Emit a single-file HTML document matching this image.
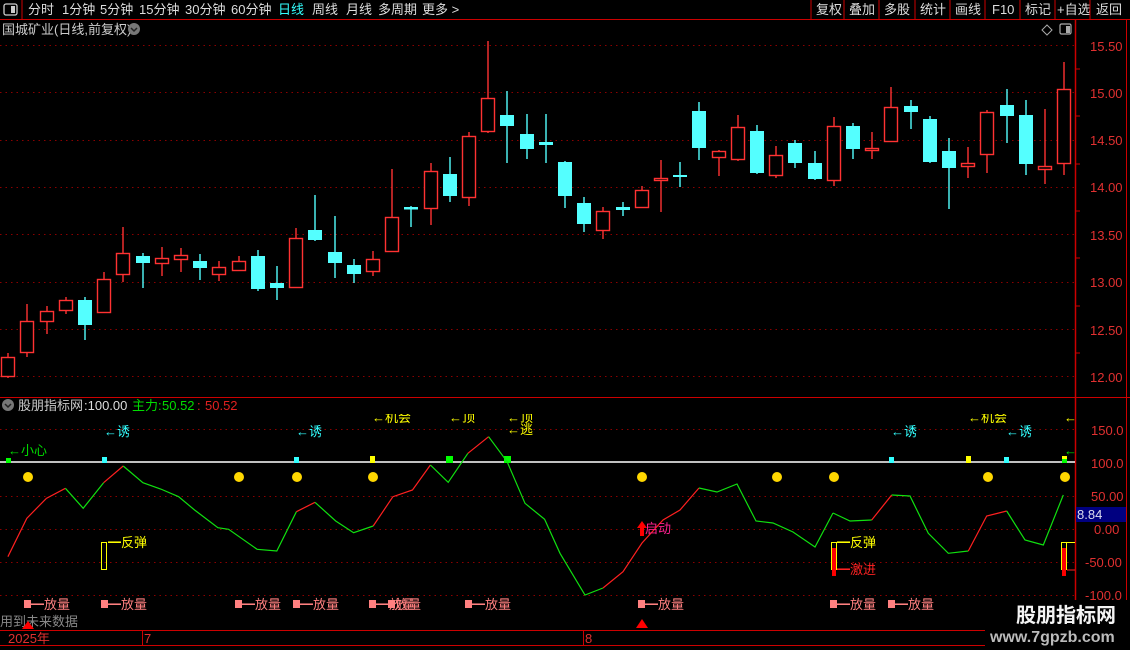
<!DOCTYPE html>
<html><head><meta charset="utf-8"><style>
html,body{margin:0;padding:0;background:#000;width:1130px;height:650px;overflow:hidden}
svg{display:block}
text{font-family:"Liberation Sans","Noto Sans CJK SC",sans-serif}
</style></head><body>
<svg width="1130" height="650" viewBox="0 0 1130 650" xmlns="http://www.w3.org/2000/svg">
<rect width="1130" height="650" fill="#000"/>
<!-- top bar -->
<rect x="4" y="4" width="13" height="11" rx="2" fill="none" stroke="#ccc" stroke-width="1.3"/>
<rect x="11" y="6" width="4" height="7" fill="#ccc"/>
<line x1="22" y1="0" x2="22" y2="19" stroke="#c00"/>
<g font-size="13" fill="#ddd">
<text x="28" y="14">分时</text><text x="62" y="14">1分钟</text><text x="100" y="14">5分钟</text><text x="139" y="14">15分钟</text><text x="185" y="14">30分钟</text><text x="231" y="14">60分钟</text>
<text x="278" y="14" fill="#3ff">日线</text><text x="312" y="14">周线</text><text x="346" y="14">月线</text><text x="378" y="14">多周期</text><text x="422" y="14">更多 &gt;</text>
<text x="816" y="14">复权</text><text x="849" y="14">叠加</text><text x="884" y="14">多股</text><text x="920" y="14">统计</text><text x="955" y="14">画线</text><text x="992" y="14">F10</text><text x="1025" y="14">标记</text><text x="1057" y="14">+自选</text><text x="1096" y="14">返回</text>
</g>
<g stroke="#c00"><line x1="811" y1="0" x2="811" y2="19"/><line x1="844" y1="0" x2="844" y2="19"/><line x1="879" y1="0" x2="879" y2="19"/><line x1="915" y1="0" x2="915" y2="19"/><line x1="950" y1="0" x2="950" y2="19"/><line x1="985" y1="0" x2="985" y2="19"/><line x1="1020" y1="0" x2="1020" y2="19"/><line x1="1055" y1="0" x2="1055" y2="19"/><line x1="1090" y1="0" x2="1090" y2="19"/></g>
<line x1="0" y1="19.5" x2="1130" y2="19.5" stroke="#c00"/>
<text x="2" y="34" font-size="13" fill="#ccc">国城矿业(日线,前复权)</text>
<circle cx="134" cy="29" r="6" fill="#777"/><path d="M131 28l3 3 3-3" stroke="#222" stroke-width="1.5" fill="none"/>
<path d="M1047 25l5 5-5 5-5-5z" fill="none" stroke="#aaa"/>
<rect x="1060" y="24" width="11" height="10" rx="1.5" fill="none" stroke="#aaa" stroke-width="1.2"/><rect x="1066" y="26" width="4" height="7" fill="#aaa"/>
<!-- axis lines -->
<line x1="1075.5" y1="19" x2="1075.5" y2="630" stroke="#c00" stroke-width="1.5"/>
<line x1="1126.5" y1="19" x2="1126.5" y2="630" stroke="#c00"/>
<!-- price grid -->
<g stroke="#8b0000" stroke-dasharray="1.5,4">
<line x1="0" y1="45.5" x2="1075" y2="45.5"/><line x1="0" y1="92.5" x2="1075" y2="92.5"/><line x1="0" y1="140.5" x2="1075" y2="140.5"/><line x1="0" y1="187.5" x2="1075" y2="187.5"/><line x1="0" y1="234.5" x2="1075" y2="234.5"/><line x1="0" y1="282.5" x2="1075" y2="282.5"/><line x1="0" y1="329.5" x2="1075" y2="329.5"/><line x1="0" y1="376.5" x2="1075" y2="376.5"/>
</g>
<g font-size="13" fill="#e03030">
<text x="1090" y="51">15.50</text><text x="1090" y="98">15.00</text><text x="1090" y="145">14.50</text><text x="1090" y="192">14.00</text><text x="1090" y="240">13.50</text><text x="1090" y="287">13.00</text><text x="1090" y="335">12.50</text><text x="1090" y="382">12.00</text>
</g>
<g stroke="#c00"><line x1="1075" y1="69" x2="1080" y2="69"/><line x1="1075" y1="116" x2="1080" y2="116"/><line x1="1075" y1="164" x2="1080" y2="164"/><line x1="1075" y1="211" x2="1080" y2="211"/><line x1="1075" y1="258" x2="1080" y2="258"/><line x1="1075" y1="306" x2="1080" y2="306"/><line x1="1075" y1="353" x2="1080" y2="353"/></g>
<!-- candles -->
<g stroke-width="1.4">
<g stroke="#ff3232" fill="#000">
<line x1="8" y1="353" x2="8" y2="378"/><rect x="1.5" y="357.5" width="13" height="19"/>
<line x1="27" y1="304" x2="27" y2="357"/><rect x="20.5" y="321.5" width="13" height="31"/>
<line x1="47" y1="306" x2="47" y2="334"/><rect x="40.5" y="311.5" width="13" height="10"/>
<line x1="66" y1="297" x2="66" y2="314"/><rect x="59.5" y="300.5" width="13" height="10"/>
<line x1="104" y1="272" x2="104" y2="313"/><rect x="97.5" y="279.5" width="13" height="33"/>
<line x1="123" y1="227" x2="123" y2="282"/><rect x="116.5" y="253.5" width="13" height="21"/>
<line x1="162" y1="247" x2="162" y2="276"/><rect x="155.5" y="258.5" width="13" height="5"/>
<line x1="181" y1="248" x2="181" y2="272"/><rect x="174.5" y="255.5" width="13" height="4"/>
<line x1="219" y1="261" x2="219" y2="281"/><rect x="212.5" y="267.5" width="13" height="7"/>
<line x1="239" y1="256" x2="239" y2="271"/><rect x="232.5" y="261.5" width="13" height="9"/>
<line x1="296" y1="228" x2="296" y2="288"/><rect x="289.5" y="238.5" width="13" height="49"/>
<line x1="373" y1="251" x2="373" y2="276"/><rect x="366.5" y="259.5" width="13" height="12"/>
<line x1="392" y1="169" x2="392" y2="252"/><rect x="385.5" y="217.5" width="13" height="34"/>
<line x1="431" y1="163" x2="431" y2="225"/><rect x="424.5" y="171.5" width="13" height="37"/>
<line x1="469" y1="132" x2="469" y2="206"/><rect x="462.5" y="136.5" width="13" height="61"/>
<line x1="488" y1="41" x2="488" y2="133"/><rect x="481.5" y="98.5" width="13" height="33"/>
<line x1="603" y1="207" x2="603" y2="239"/><rect x="596.5" y="211.5" width="13" height="19"/>
<line x1="642" y1="186" x2="642" y2="208"/><rect x="635.5" y="190.5" width="13" height="17"/>
<line x1="661" y1="160" x2="661" y2="212"/><rect x="654.5" y="178.5" width="13" height="2"/>
<line x1="719" y1="150" x2="719" y2="176"/><rect x="712.5" y="151.5" width="13" height="6"/>
<line x1="738" y1="115" x2="738" y2="161"/><rect x="731.5" y="127.5" width="13" height="32"/>
<line x1="776" y1="146" x2="776" y2="178"/><rect x="769.5" y="155.5" width="13" height="20"/>
<line x1="834" y1="117" x2="834" y2="186"/><rect x="827.5" y="126.5" width="13" height="54"/>
<line x1="872" y1="132" x2="872" y2="159"/><rect x="865.5" y="148.5" width="13" height="2"/>
<line x1="891" y1="87" x2="891" y2="142"/><rect x="884.5" y="107.5" width="13" height="34"/>
<line x1="968" y1="147" x2="968" y2="178"/><rect x="961.5" y="163.5" width="13" height="3"/>
<line x1="987" y1="110" x2="987" y2="173"/><rect x="980.5" y="112.5" width="13" height="42"/>
<line x1="1045" y1="109" x2="1045" y2="184"/><rect x="1038.5" y="166.5" width="13" height="3"/>
<line x1="1064" y1="62" x2="1064" y2="175"/><rect x="1057.5" y="89.5" width="13" height="74"/>
</g>
<g stroke="#54ffff" fill="#54ffff">
<line x1="85" y1="297" x2="85" y2="340"/><rect x="78" y="300" width="14" height="25" stroke="none"/>
<line x1="143" y1="253" x2="143" y2="288"/><rect x="136" y="256" width="14" height="7" stroke="none"/>
<line x1="200" y1="254" x2="200" y2="280"/><rect x="193" y="261" width="14" height="7" stroke="none"/>
<line x1="258" y1="250" x2="258" y2="291"/><rect x="251" y="256" width="14" height="33" stroke="none"/>
<line x1="277" y1="266" x2="277" y2="300"/><rect x="270" y="283" width="14" height="5" stroke="none"/>
<line x1="315" y1="195" x2="315" y2="241"/><rect x="308" y="230" width="14" height="10" stroke="none"/>
<line x1="335" y1="216" x2="335" y2="278"/><rect x="328" y="252" width="14" height="11" stroke="none"/>
<line x1="354" y1="259" x2="354" y2="283"/><rect x="347" y="265" width="14" height="9" stroke="none"/>
<line x1="411" y1="206" x2="411" y2="227"/><rect x="404" y="207" width="14" height="2.5" stroke="none"/>
<line x1="450" y1="157" x2="450" y2="202"/><rect x="443" y="174" width="14" height="22" stroke="none"/>
<line x1="507" y1="91" x2="507" y2="163"/><rect x="500" y="115" width="14" height="11" stroke="none"/>
<line x1="527" y1="114" x2="527" y2="159"/><rect x="520" y="134" width="14" height="15" stroke="none"/>
<line x1="546" y1="114" x2="546" y2="163"/><rect x="539" y="142" width="14" height="3" stroke="none"/>
<line x1="565" y1="161" x2="565" y2="208"/><rect x="558" y="162" width="14" height="34" stroke="none"/>
<line x1="584" y1="197" x2="584" y2="232"/><rect x="577" y="203" width="14" height="21" stroke="none"/>
<line x1="623" y1="202" x2="623" y2="216"/><rect x="616" y="207" width="14" height="3" stroke="none"/>
<line x1="680" y1="162" x2="680" y2="187"/><rect x="673" y="175" width="14" height="2" stroke="none"/>
<line x1="699" y1="102" x2="699" y2="160"/><rect x="692" y="111" width="14" height="37" stroke="none"/>
<line x1="757" y1="125" x2="757" y2="174"/><rect x="750" y="131" width="14" height="42" stroke="none"/>
<line x1="795" y1="140" x2="795" y2="168"/><rect x="788" y="143" width="14" height="20" stroke="none"/>
<line x1="815" y1="151" x2="815" y2="180"/><rect x="808" y="163" width="14" height="16" stroke="none"/>
<line x1="853" y1="123" x2="853" y2="159"/><rect x="846" y="126" width="14" height="23" stroke="none"/>
<line x1="911" y1="100" x2="911" y2="129"/><rect x="904" y="106" width="14" height="6" stroke="none"/>
<line x1="930" y1="116" x2="930" y2="163"/><rect x="923" y="119" width="14" height="43" stroke="none"/>
<line x1="949" y1="138" x2="949" y2="209"/><rect x="942" y="151" width="14" height="17" stroke="none"/>
<line x1="1007" y1="89" x2="1007" y2="143"/><rect x="1000" y="105" width="14" height="11" stroke="none"/>
<line x1="1026" y1="100" x2="1026" y2="175"/><rect x="1019" y="115" width="14" height="49" stroke="none"/>
</g>
</g>
<!-- indicator panel -->
<line x1="0" y1="397.5" x2="1130" y2="397.5" stroke="#c00"/>
<circle cx="8" cy="405" r="6" fill="#777"/><path d="M5 404l3 3 3-3" stroke="#222" stroke-width="1.5" fill="none"/>
<text x="18" y="410" font-size="13" fill="#ccc">股朋指标网</text>
<text x="84" y="410" font-size="13" fill="#ddd">:100.00</text>
<text x="132" y="410" font-size="13" fill="#0d0">主力:</text><text x="162" y="410" font-size="13" fill="#0d0">50.52</text>
<text x="197" y="410" font-size="13" fill="#e02020">:</text><text x="205" y="410" font-size="13" fill="#e02020">50.52</text>
<g stroke="#8b0000" stroke-dasharray="1.5,4">
<line x1="0" y1="429.5" x2="1075" y2="429.5"/><line x1="0" y1="496.5" x2="1075" y2="496.5"/><line x1="0" y1="529.5" x2="1075" y2="529.5"/><line x1="0" y1="562.5" x2="1075" y2="562.5"/><line x1="0" y1="595.5" x2="1075" y2="595.5"/>
</g>
<g font-size="13" fill="#e03030">
<text x="1091" y="435">150.0</text><text x="1091" y="468">100.0</text><text x="1091" y="501">50.00</text><text x="1094" y="534">0.00</text><text x="1085" y="567">-50.00</text><text x="1085" y="600">-100.0</text>
</g>
<rect x="1076" y="507" width="50" height="15" fill="#000080"/>
<text x="1077" y="519" font-size="13" fill="#dde">8.84</text>
<line x1="0" y1="462" x2="1075" y2="462" stroke="#fff" stroke-width="1.5"/>
<!-- clipped yellow labels -->
<svg x="0" y="414" width="1075" height="30">
<g font-size="13" fill="#ff0">
<text x="372" y="8">←机会</text><text x="449" y="8">←顶</text><text x="507" y="8">←顶</text><text x="968" y="8">←机会</text><text x="1064" y="8">←</text>
</g></svg>
<text x="507" y="434" font-size="13" fill="#ff0">←逃</text>
<text x="8" y="455" font-size="13" fill="#0d0">←小心</text>
<g font-size="13" fill="#3ff"><text x="104" y="436">←诱</text><text x="296" y="436">←诱</text><text x="891" y="436">←诱</text><text x="1006" y="436">←诱</text></g>
<text x="1064" y="455" font-size="13" fill="#0d0">←</text>
<!-- squares on line -->
<rect x="6" y="458" width="5" height="5" fill="#0f0"/>
<rect x="102" y="457" width="5" height="6" fill="#3ff"/>
<rect x="294" y="457" width="5" height="6" fill="#3ff"/>
<rect x="370" y="456" width="5" height="7" fill="#ff0"/>
<rect x="446" y="456" width="7" height="7" fill="#0f0"/>
<rect x="504" y="456" width="7" height="7" fill="#0f0"/>
<rect x="889" y="457" width="5" height="6" fill="#3ff"/>
<rect x="966" y="456" width="5" height="7" fill="#ff0"/>
<rect x="1004" y="457" width="5" height="6" fill="#3ff"/>
<rect x="1062" y="456" width="5" height="3" fill="#ff0"/><rect x="1062" y="459" width="5" height="4" fill="#0f0"/>
<!-- dots -->
<g fill="#ffd700"><circle cx="28" cy="477" r="5"/><circle cx="239" cy="477" r="5"/><circle cx="297" cy="477" r="5"/><circle cx="373" cy="477" r="5"/><circle cx="642" cy="477" r="5"/><circle cx="777" cy="477" r="5"/><circle cx="834" cy="477" r="5"/><circle cx="988" cy="477" r="5"/><circle cx="1065" cy="477" r="5"/></g>
<!-- main line -->
<g fill="none" stroke-width="1.2">
<polyline stroke="#ff2020" points="7.9,556.7 26.8,518.3 46.4,498.3 65.4,488.3"/>
<polyline stroke="#10e010" points="65.4,488.3 83.2,508.3 103.6,482.7"/>
<polyline stroke="#ff2020" points="103.6,482.7 123.2,466"/>
<polyline stroke="#10e010" points="123.2,466 142.9,482.7 160.7,489 178.6,496.7 194.6,510 217.9,527.7 228.6,529.3 257.1,549.3 276.8,551 296.4,511.7"/>
<polyline stroke="#ff2020" points="296.4,511.7 315,502.3"/>
<polyline stroke="#10e010" points="315,502.3 335.7,521 353.6,532.7 373.2,526"/>
<polyline stroke="#ff2020" points="373.2,526 392.9,496.7 412.5,490 430.4,465"/>
<polyline stroke="#10e010" points="430.4,465 448.2,482.3 467.9,453.3"/>
<polyline stroke="#ff2020" points="467.9,453.3 488.6,436.7"/>
<polyline stroke="#10e010" points="488.6,436.7 507.1,461.7 525,503.3 544.6,519.3 560,553.3 585,595 603,588"/>
<polyline stroke="#ff2020" points="603,588 623,571.7 642,543 663,520 680,510 699,488"/>
<polyline stroke="#10e010" points="699,488 717,492 737,484 756,521 773,523 793,532 815,547 833,513"/>
<polyline stroke="#10e010" points="833,513 850,521 871.7,520"/>
<polyline stroke="#ff2020" points="871.7,520 891.7,495"/>
<polyline stroke="#10e010" points="891.7,495 910,496 928.3,533.3 948.3,553.3 968.3,551"/>
<polyline stroke="#ff2020" points="968.3,551 986.7,516 1006.7,511"/>
<polyline stroke="#10e010" points="1006.7,511 1025,540 1043.3,545 1063.3,495"/>
</g>
<!-- 启动 -->
<path d="M642 521l-5 7h3v8h4v-8h3z" fill="#f00"/>
<text x="645" y="533" font-size="13" fill="#ff2090">启动</text>
<!-- 反弹 boxes -->
<rect x="101.5" y="542.5" width="5" height="27" fill="none" stroke="#ff0"/>
<text x="108" y="547" font-size="13" fill="#ff0">━反弹</text>
<rect x="831.5" y="542.5" width="5" height="27" fill="none" stroke="#ff0"/>
<rect x="832" y="548" width="4" height="28" fill="#f00"/>
<text x="837" y="547" font-size="13" fill="#ff0">━反弹</text>
<text x="837" y="574" font-size="13" fill="#f22">━激进</text>
<rect x="1061.5" y="542.5" width="5" height="27" fill="none" stroke="#ff0"/>
<rect x="1062" y="548" width="4" height="28" fill="#f00"/>
<line x1="1067" y1="542.5" x2="1075" y2="542.5" stroke="#ff0"/><line x1="1067" y1="570" x2="1075" y2="570" stroke="#f22"/>
<!-- 放量 -->
<g fill="#ff8080" font-size="13">
<rect x="24" y="600" width="7" height="8"/><text x="31" y="609">━放量</text>
<rect x="101" y="600" width="7" height="8"/><text x="108" y="609">━放量</text>
<rect x="235" y="600" width="7" height="8"/><text x="242" y="609">━放量</text>
<rect x="293" y="600" width="7" height="8"/><text x="300" y="609">━放量</text>
<rect x="369" y="600" width="7" height="8"/><text x="376" y="609">━放量</text>
<rect x="388" y="600" width="7" height="8"/><text x="395" y="609">放量</text>
<rect x="465" y="600" width="7" height="8"/><text x="472" y="609">━放量</text>
<rect x="638" y="600" width="7" height="8"/><text x="645" y="609">━放量</text>
<rect x="830" y="600" width="7" height="8"/><text x="837" y="609">━放量</text>
<rect x="888" y="600" width="7" height="8"/><text x="895" y="609">━放量</text>
</g>
<text x="0" y="626" font-size="13" fill="#888">用到未来数据</text>
<path d="M28 621l-6 8h12z" fill="#f00"/>
<path d="M642 619l-6 9h12z" fill="#f00"/>
<!-- date bar -->
<line x1="0" y1="630.5" x2="1130" y2="630.5" stroke="#c00"/>
<line x1="142.5" y1="630" x2="142.5" y2="645" stroke="#c00"/>
<line x1="583.5" y1="630" x2="583.5" y2="645" stroke="#c00"/>
<line x1="0" y1="645.5" x2="1130" y2="645.5" stroke="#c00"/>
<text x="8" y="643" font-size="13" fill="#e03030">2025年</text>
<text x="144" y="643" font-size="13" fill="#e03030">7</text>
<text x="585" y="643" font-size="13" fill="#e03030">8</text>
<!-- watermark -->
<rect x="985" y="600" width="145" height="50" fill="#000"/>
<text x="1016" y="622" font-size="20" font-weight="bold" fill="#f4f4f4">股朋指标网</text>
<text x="990" y="642" font-size="16" font-weight="bold" fill="#bbb">www.7gpzb.com</text>
</svg>
</body></html>
